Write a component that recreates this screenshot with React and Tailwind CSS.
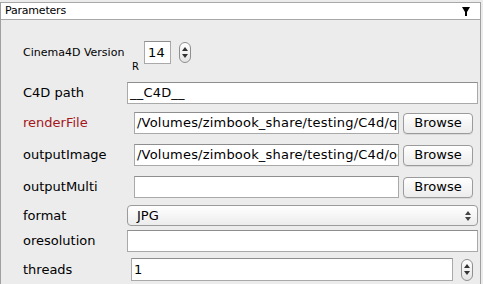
import React from "react";

function Stepper({ className = "" }) {
  return (
    <div
      className={
        "w-[12px] h-[21px] rounded-full border border-[#8f8f8f] bg-gradient-to-b from-white to-[#e4e4e4] flex flex-col items-center justify-center gap-[3px] " +
        className
      }
    >
      <svg width="6" height="4" viewBox="0 0 6 4">
        <polygon points="3,0 6,4 0,4" fill="#333" />
      </svg>
      <svg width="6" height="4" viewBox="0 0 6 4">
        <polygon points="0,0 6,0 3,4" fill="#333" />
      </svg>
    </div>
  );
}

function Browse() {
  return (
    <div className="ml-[4px] w-[70px] h-[21px] rounded-[4px] border border-[#9b9b9b] bg-gradient-to-b from-white to-[#ececec] flex items-center justify-center text-[13px] text-black shadow-[0_1px_0_rgba(0,0,0,0.08)]">
      Browse
    </div>
  );
}

function Field({ value = "", className = "" }) {
  return (
    <div
      className={
        "bg-white border border-[#a9a9a9] border-t-[#8e8e8e] flex items-center pl-[2px] text-[13px] tracking-[0.2px] text-black whitespace-nowrap overflow-hidden " +
        className
      }
    >
      {value}
    </div>
  );
}

export default function App() {
  return (
    <div className="w-[483px] h-[284px] bg-[#ececec] pt-[2px] pr-[2px] overflow-hidden font-['DejaVu_Sans',sans-serif] text-black">
      <div className="h-[282px] border-l border-r border-[#a0a0a0]">
        <div className="h-[18px] bg-white border-t border-b border-[#a8a8a8] flex items-center justify-between pl-[4px] pr-[10px] text-[11px] tracking-[-0.2px]">
          <span>Parameters</span>
          <svg width="8" height="9" viewBox="0 0 8 9">
            <polygon points="0,0 8,0 5,5 5,9 3,9 3,5" fill="#000" />
          </svg>
        </div>

        <div className="pl-[22px]">
          {/* Cinema4D Version */}
          <div className="mt-[21px] flex items-start h-[23px]">
            <span className="w-[109px] text-[11px] leading-[23px]">Cinema4D Version</span>
            <span className="text-[10px] mt-[18px] w-[12px]">R</span>
            <Field value="14" className="w-[27px] h-[23px] pl-[3px]" />
            <Stepper className="ml-[8px] mt-[1px]" />
          </div>

          {/* C4D path */}
          <div className="mt-[18px] flex items-center h-[22px]">
            <span className="w-[104px] text-[13px]">C4D path</span>
            <Field value="__C4D__" className="w-[351px] h-[22px]" />
          </div>

          {/* renderFile */}
          <div className="mt-[8px] flex items-center h-[22px]">
            <span className="w-[111px] text-[13px] text-[#a3161a]">renderFile</span>
            <Field
              value="/Volumes/zimbook_share/testing/C4d/qq"
              className="w-[265px] h-[22px]"
            />
            <Browse />
          </div>

          {/* outputImage */}
          <div className="mt-[10px] flex items-center h-[22px]">
            <span className="w-[111px] text-[13px]">outputImage</span>
            <Field
              value="/Volumes/zimbook_share/testing/C4d/oo"
              className="w-[265px] h-[22px]"
            />
            <Browse />
          </div>

          {/* outputMulti */}
          <div className="mt-[10px] flex items-center h-[22px]">
            <span className="w-[111px] text-[13px]">outputMulti</span>
            <Field value="" className="w-[265px] h-[22px]" />
            <Browse />
          </div>

          {/* format */}
          <div className="mt-[7px] flex items-center h-[21px]">
            <span className="w-[104px] text-[13px]">format</span>
            <div className="w-[351px] h-[21px] rounded-[4px] border border-[#9b9b9b] bg-gradient-to-b from-white to-[#ececec] flex items-center justify-between pl-[9px] pr-[6px] text-[13px]">
              <span>JPG</span>
              <svg width="6" height="10" viewBox="0 0 6 10">
                <polygon points="3,0 6,4 0,4" fill="#444" />
                <polygon points="0,6 6,6 3,10" fill="#444" />
              </svg>
            </div>
          </div>

          {/* oresolution */}
          <div className="mt-[4px] flex items-center h-[22px]">
            <span className="w-[104px] text-[13px]">oresolution</span>
            <Field value="" className="w-[351px] h-[22px]" />
          </div>

          {/* threads */}
          <div className="mt-[6px] flex items-center h-[23px]">
            <span className="w-[108px] text-[13px]">threads</span>
            <Field value="1" className="w-[322px] h-[23px]" />
            <Stepper className="ml-[8px] h-[22px]" />
          </div>
        </div>
      </div>
    </div>
  );
}
